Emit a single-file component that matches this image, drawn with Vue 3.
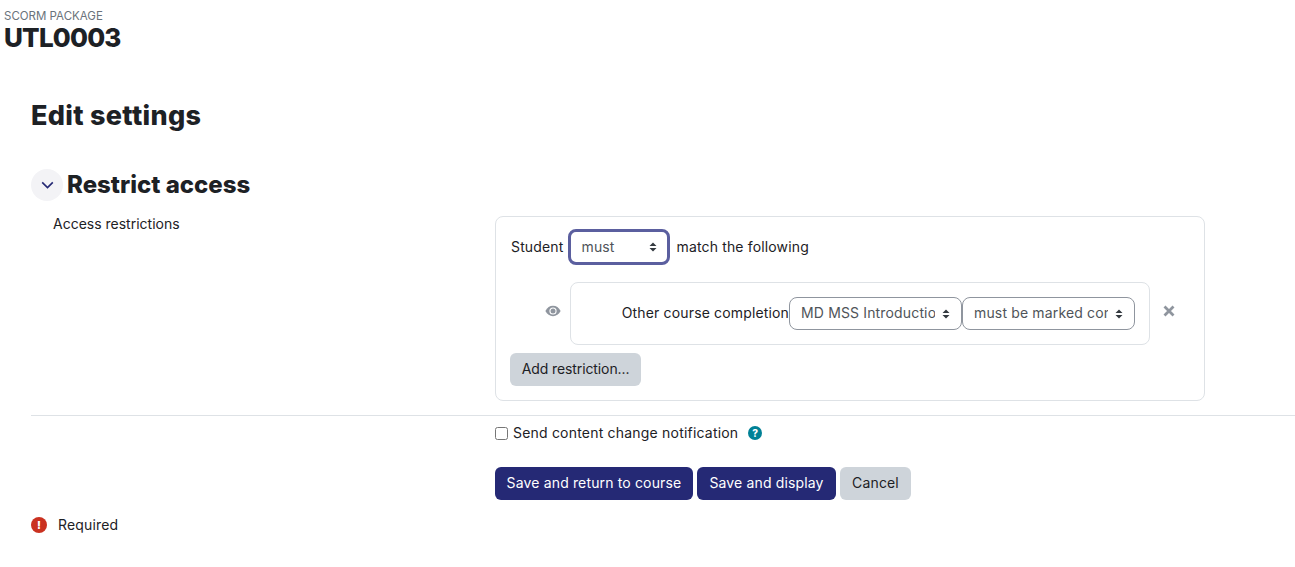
<template>
  <div class="page">
    <header class="page-head">
      <div class="modtype">SCORM PACKAGE</div>
      <h1>UTL0003</h1>
    </header>

    <main class="content">
      <h2>Edit settings</h2>

      <div class="section-head">
        <span class="toggle">
          <svg width="13" height="8" viewBox="0 0 13 8"><path d="M1.200 1.400 6.500 6.600l5.300-5.200" fill="none" stroke="#252975" stroke-width="1.600" /></svg>
        </span>
        <h3>Restrict access</h3>
      </div>

      <div class="form-row">
        <div class="form-label">Access restrictions</div>
        <div class="availability">
          <div class="match-row">
            <span>Student</span>
            <select class="sel sel-must">
              <option>must</option>
            </select>
            <span>match the following</span>
          </div>

          <div class="condition-row">
            <span class="eye">
              <svg width="16" height="12" viewBox="0 0 16 12">
                <path d="M.4 6C2.100 2.700 4.800.8 8 .8s5.900 1.900 7.600 5.200C13.900 9.300 11.200 11.200 8 11.200S2.100 9.300.4 6Z" fill="#8f959e" />
                <circle cx="8" cy="6" r="3.600" fill="#fff" />
                <circle cx="8" cy="6" r="2.500" fill="#8f959e" />
              </svg>
            </span>
            <div class="condition">
              <span class="cond-label">Other course completion</span>
              <select class="sel sel-cond">
                <option>MD MSS Introduction to Safeguarding</option>
              </select>
              <select class="sel sel-cond">
                <option>must be marked complete</option>
              </select>
            </div>
            <span class="remove">
              <svg width="12" height="12" viewBox="0 0 12 12"><path d="M1.500 1.500l9 9M10.500 1.500l-9 9" stroke="#8f959e" stroke-width="2.800" /></svg>
            </span>
          </div>

          <button class="btn btn-grey add-btn">Add restriction...</button>
        </div>
      </div>

      <hr />

      <div class="form-col">
        <label class="notify">
          <input type="checkbox" />
          <span>Send content change notification</span>
          <span class="help">?</span>
        </label>

        <div class="actions">
          <button class="btn btn-primary">Save and return to course</button>
          <button class="btn btn-primary">Save and display</button>
          <button class="btn btn-grey">Cancel</button>
        </div>
      </div>

      <div class="required">
        <span class="req-icon">!</span>
        <span>Required</span>
      </div>
    </main>
  </div>
</template>

<script setup>
</script>

<style>
html, body {
  background: #fff;
}
</style>

<style scoped>
.page {
  height: 567px;
  overflow: hidden;
  font-family: Inter, "Liberation Sans", sans-serif;
  font-size: 14px;
  letter-spacing: 0.15px;
  line-height: 20px;
  color: #1d2125;
}

.page-head {
  padding: 9px 0 0 4px;
}

.modtype {
  font-size: 11.5px;
  line-height: 14px;
  letter-spacing: 0;
  color: #6a737b;
}

h1 {
  margin: 0;
  font-size: 26px;
  line-height: 30px;
  font-weight: 800;
  letter-spacing: -0.8px;
}

.content {
  padding: 0 0 0 31px;
}

h2 {
  margin: 45px 0 0;
  font-size: 27px;
  line-height: 36px;
  font-weight: 800;
  letter-spacing: 0.3px;
}

.section-head {
  display: flex;
  align-items: center;
  gap: 4px;
  margin-top: 35px;
}

.toggle {
  display: flex;
  align-items: center;
  justify-content: center;
  width: 32px;
  height: 32px;
  border-radius: 50%;
  background: #f3f3f6;
}

h3 {
  margin: 0;
  font-size: 24px;
  line-height: 32px;
  font-weight: 800;
  letter-spacing: 0;
}

.form-row {
  display: flex;
  margin-top: 15px;
}

.form-label {
  width: 442px;
  margin-left: 22px;
  line-height: 16px;
  letter-spacing: 0;
}

.availability {
  width: 710px;
  height: 185px;
  box-sizing: border-box;
  padding: 12px 14px;
  border: 1px solid #dee2e6;
  border-radius: 8px;
}

.match-row {
  display: flex;
  align-items: center;
  gap: 5px;
  height: 36px;
  padding-left: 1px;
}

.match-row span {
  padding-bottom: 1px;
}

.sel {
  appearance: none;
  -webkit-appearance: none;
  box-sizing: border-box;
  margin: 0;
  height: 33px;
  padding: 0 26px 1px 11px;
  border: 1px solid #8f959e;
  border-radius: 8px;
  outline: none;
  color: #4f5459;
  font: inherit;
  letter-spacing: inherit;
  background: #fff url("data:image/svg+xml,%3Csvg xmlns='http://www.w3.org/2000/svg' width='8' height='10' viewBox='0 0 8 10'%3E%3Cpath d='M4 .5 7.500 4H.5ZM4 9.500 .5 6h7Z' fill='%23343a40'/%3E%3C/svg%3E") no-repeat right 11px center;
}

.sel-must {
  width: 102px;
  height: 36px;
  border: 3px solid #5b5f9f;
  padding-left: 10px;
  background-position: right 10px center;
}

.match-row .sel-must + span {
  margin-left: 1px;
}

.condition-row {
  display: flex;
  align-items: center;
  margin-top: 17px;
}

.eye {
  display: flex;
  width: 60px;
  justify-content: flex-end;
  padding-right: 9px;
  box-sizing: border-box;
  margin-top: -6px;
}

.condition {
  display: flex;
  align-items: center;
  justify-content: flex-end;
  width: 580px;
  height: 63px;
  box-sizing: border-box;
  padding-right: 14px;
  border: 1px solid #dee2e6;
  border-radius: 8px;
}

.cond-label {
  white-space: nowrap;
  padding-bottom: 1px;
}

.sel-cond {
  width: 173px;
}

.remove {
  display: flex;
  margin: -6px 0 0 13px;
}

.btn {
  height: 33px;
  padding: 0 0 2px;
  border: none;
  border-radius: 6px;
  font: inherit;
  letter-spacing: inherit;
  white-space: nowrap;
}

.btn-grey {
  background: #ced4da;
  color: #1d2125;
}

.btn-primary {
  background: #252975;
  color: #fff;
}

.add-btn {
  display: block;
  width: 131px;
  margin-top: 8px;
  letter-spacing: -0.1px;
}

hr {
  margin: 14px 0 0;
  border: none;
  border-top: 1px solid #dee2e6;
}

.form-col {
  margin-left: 464px;
}

.notify {
  display: flex;
  align-items: center;
  height: 20px;
  margin-top: 7px;
  letter-spacing: 0.2px;
}

.notify input {
  width: 13px;
  height: 13px;
  margin: 0 5px 0 0;
}

.help {
  display: flex;
  align-items: center;
  justify-content: center;
  width: 14px;
  height: 14px;
  margin-left: 10px;
  border-radius: 50%;
  background: #008196;
  color: #fff;
  font-size: 10px;
  font-weight: 800;
}

.actions {
  display: flex;
  gap: 4px;
  margin-top: 24px;
}

.actions .btn:nth-child(1) {
  width: 198px;
}

.actions .btn:nth-child(2) {
  width: 139px;
}

.actions .btn:nth-child(3) {
  width: 71px;
}

.required {
  display: flex;
  align-items: center;
  gap: 11px;
  margin-top: 15px;
}

.req-icon {
  display: flex;
  align-items: center;
  justify-content: center;
  width: 16px;
  height: 16px;
  border-radius: 50%;
  background: #ca3120;
  color: #fff;
  font-size: 11px;
  font-weight: 800;
}
</style>
